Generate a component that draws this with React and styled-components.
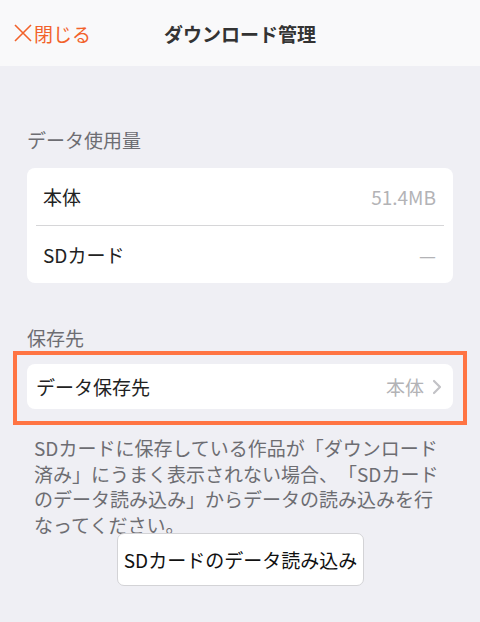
import styled, { createGlobalStyle } from "styled-components";

const GlobalStyle = createGlobalStyle`
  body {
    margin: 0;
    background: #efeff4;
    font-family: "Noto Sans CJK JP", "Noto Sans", sans-serif;
    -webkit-font-smoothing: antialiased;
    text-spacing-trim: space-all;
  }
`;

const Page = styled.div`
  min-height: 622px;
  background: #efeff4;
`;

const Header = styled.header`
  display: grid;
  grid-template-columns: 1fr auto 1fr;
  align-items: center;
  height: 66px;
  padding: 0 13px;
  background: #f9f9fa;
`;

const CloseButton = styled.button`
  display: flex;
  align-items: center;
  gap: 1px;
  justify-self: start;
  padding: 0;
  border: 0;
  background: none;
  color: #f2622a;
  font-family: inherit;
  font-size: 19px;
  line-height: 1;
`;

const Title = styled.h1`
  margin: 0;
  color: #333;
  font-size: 19px;
  font-weight: 700;
`;

const Main = styled.main`
  padding: 61px 27px 0;
`;

const SectionLabel = styled.h2`
  margin: ${({ $top }) => $top || 0}px 0 ${({ $bottom }) => $bottom || 0}px;
  color: #6d6d72;
  font-size: 19px;
  font-weight: 400;
  line-height: 26px;
`;

const Card = styled.div`
  background: #fff;
  border-radius: 8px;
  overflow: hidden;
`;

const Row = styled.div`
  display: flex;
  align-items: center;
  justify-content: space-between;
  height: ${({ $h }) => $h || 57}px;
  padding: 0 ${({ $pr }) => $pr || 17}px 0 ${({ $pl }) => $pl || 16}px;
  color: #222;
  font-size: 19px;
`;

const Divider = styled.div`
  height: 1px;
  margin: 0 9px;
  background: #d6d6d8;
`;

const Value = styled.span`
  display: flex;
  align-items: center;
  gap: 8px;
  color: #b3b3b6;
  font-size: 19px;
`;

const Highlight = styled.div`
  margin: 0 -14px;
  padding: 9px 10px 12px;
  border: 4px solid #ff7443;
`;

const Note = styled.p`
  margin: 10px 0 0;
  padding: 0 5px 0 7px;
  color: #6d6d72;
  font-size: 19px;
  line-height: 25.5px;
  text-spacing-trim: space-all;
`;

const ButtonRow = styled.div`
  display: flex;
  justify-content: center;
  margin-top: -4px;
`;

const ActionButton = styled.button`
  width: 247px;
  height: 53px;
  margin-left: 1px;
  padding: 0;
  border: 1px solid #d3d3d6;
  border-radius: 7px;
  background: #fff;
  color: #111;
  font-family: inherit;
  font-size: 19px;
`;

function CrossIcon() {
  return (
    <svg width="20" height="20" viewBox="0 0 20 20">
      <path d="M2 2 L18 18 M18 2 L2 18" stroke="#f2622a" strokeWidth="1.6" fill="none" />
    </svg>
  );
}

function Chevron() {
  return (
    <svg width="10" height="16" viewBox="0 0 10 16">
      <path d="M2 2 L8 8 L2 14" stroke="#c2c2c6" strokeWidth="2.2" fill="none" strokeLinecap="round" strokeLinejoin="round" />
    </svg>
  );
}

export default function App() {
  return (
    <Page>
      <GlobalStyle />
      <Header>
        <CloseButton>
          <CrossIcon />
          閉じる
        </CloseButton>
        <Title>ダウンロード管理</Title>
        <span />
      </Header>
      <Main>
        <SectionLabel $bottom={15}>データ使用量</SectionLabel>
        <Card>
          <Row>
            本体
            <Value>51.4MB</Value>
          </Row>
          <Divider />
          <Row>
            SDカード
            <Value>—</Value>
          </Row>
        </Card>
        <SectionLabel $top={42}>保存先</SectionLabel>
        <Highlight>
          <Card>
            <Row $h={45} $pl={9} $pr={11}>
              データ保存先
              <Value>
                本体
                <Chevron />
              </Value>
            </Row>
          </Card>
        </Highlight>
        <Note>
          SDカードに保存している作品が「ダウンロード済み」にうまく表示されない場合、「SDカードのデータ読み込み」からデータの読み込みを行なってください。
        </Note>
        <ButtonRow>
          <ActionButton>SDカードのデータ読み込み</ActionButton>
        </ButtonRow>
      </Main>
    </Page>
  );
}
